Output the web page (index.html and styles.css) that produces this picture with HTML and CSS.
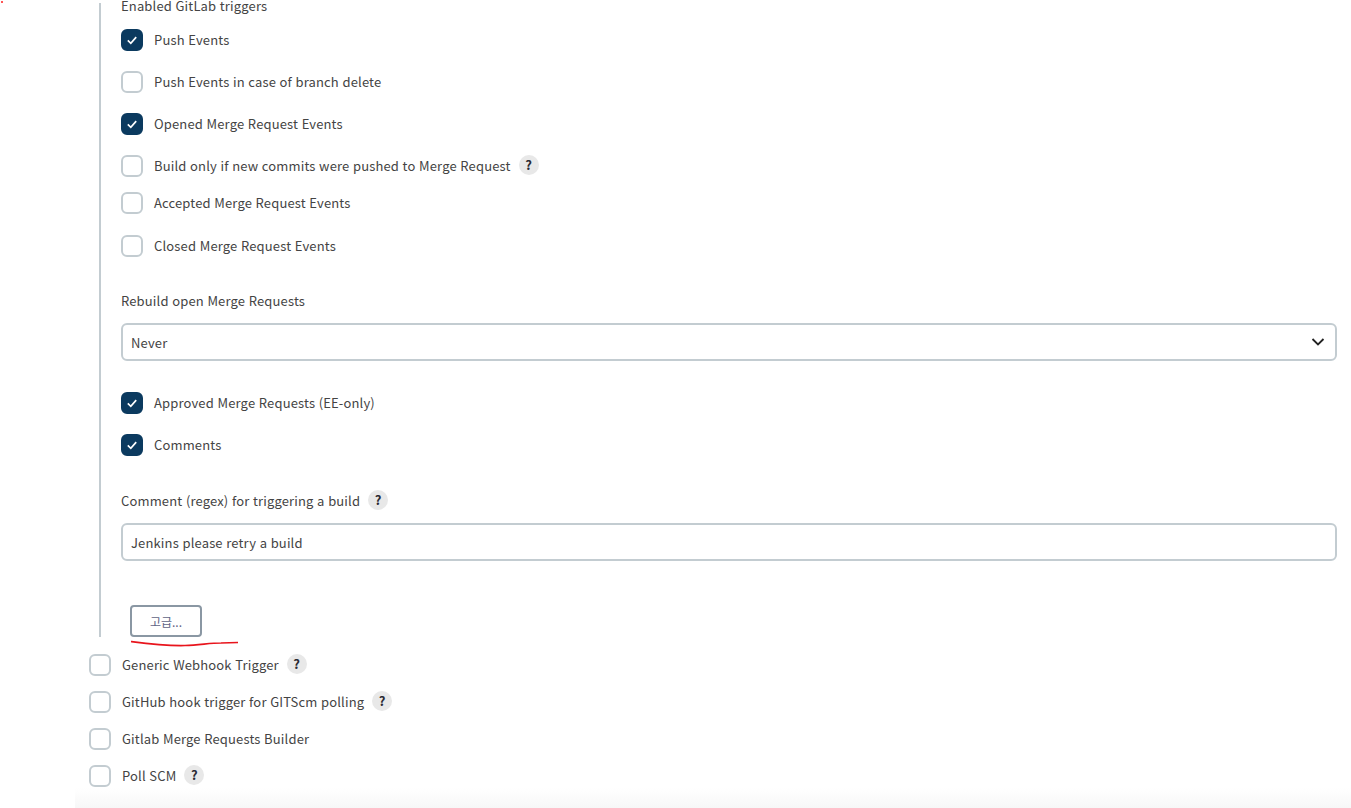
FILE: index.html
```html
<!DOCTYPE html>
<html lang="en">
<head>
  <meta charset="UTF-8" />
  <meta name="viewport" content="width=device-width, initial-scale=1.0" />
  <title>Build Triggers</title>
  <link rel="stylesheet" href="styles.css">
</head>
<body>
  <span class="red-dot"></span>

  <main class="triggers">
    <section class="nested">
      <div class="group-title">Enabled GitLab triggers</div>

      <label class="row"><span class="box checked"><svg viewBox="0 0 22 22"><path d="M6.8 11.4l3 2.9 5.4-6.2"/></svg></span>Push Events</label>
      <label class="row"><span class="box"></span>Push Events in case of branch delete</label>
      <label class="row"><span class="box checked"><svg viewBox="0 0 22 22"><path d="M6.8 11.4l3 2.9 5.4-6.2"/></svg></span>Opened Merge Request Events</label>
      <label class="row row-tight"><span class="box"></span>Build only if new commits were pushed to Merge Request<span class="help">?</span></label>
      <label class="row row-wide"><span class="box"></span>Accepted Merge Request Events</label>
      <label class="row"><span class="box"></span>Closed Merge Request Events</label>

      <div class="field-label rebuild-label">Rebuild open Merge Requests</div>
      <div class="field select">
        Never
        <svg class="chevron" viewBox="0 0 14 10"><path d="M1.5 2l5.500 5.500 5.500-5.500"/></svg>
      </div>

      <label class="row"><span class="box checked"><svg viewBox="0 0 22 22"><path d="M6.8 11.4l3 2.9 5.4-6.2"/></svg></span>Approved Merge Requests (EE-only)</label>
      <label class="row"><span class="box checked"><svg viewBox="0 0 22 22"><path d="M6.8 11.4l3 2.9 5.4-6.2"/></svg></span>Comments</label>

      <div class="field-label comment-label">Comment (regex) for triggering a build<span class="help">?</span></div>
      <div class="field">Jenkins please retry a build</div>

      <div class="advanced">
        <button class="btn-advanced">고급...</button>
        <svg class="scribble" viewBox="0 0 110 8"><path d="M1 1.500C20 4 35 6 55 5.500C70 5 80 3 91 3L108 2.500"/></svg>
      </div>
    </section>

    <label class="row row-outer"><span class="box"></span>Generic Webhook Trigger<span class="help">?</span></label>
    <label class="row row-outer"><span class="box"></span>GitHub hook trigger for GITScm polling<span class="help">?</span></label>
    <label class="row row-outer"><span class="box"></span>Gitlab Merge Requests Builder</label>
    <label class="row row-outer"><span class="box"></span>Poll SCM<span class="help">?</span></label>
  </main>

  <div class="bottom-fade"></div>
</body>
</html>
```

FILE: styles.css
```css
html,
body {
  height: 808px;
  overflow: hidden;
}

body {
  margin: 0;
  background: #fff;
  color: #444;
  font-family: "Noto Sans CJK KR", "Noto Sans", sans-serif;
  font-size: 13px;
  letter-spacing: 0.15px;
  word-spacing: 0.5px;
  position: relative;
}

.red-dot {
  position: absolute;
  left: 1px;
  top: 1px;
  width: 2px;
  height: 2px;
  background: #f55;
}

.triggers {
  padding-left: 89px;
  padding-right: 14px;
  padding-top: 3px;
}

.nested {
  display: flow-root;
  margin-left: 10px;
  border-left: 2px solid #c3ccd1;
  padding-left: 20px;
  height: 634px;
  box-sizing: border-box;
}

.group-title {
  height: 26px;
  line-height: 12px;
  margin-top: -3px;
  margin-bottom: 3px;
}

.row {
  display: flex;
  align-items: center;
  height: 22px;
  box-sizing: border-box;
  padding-bottom: 2px;
  margin-bottom: 20px;
  white-space: nowrap;
}

.row-tight {
  margin-bottom: 15px;
}

.row-wide {
  margin-bottom: 21px;
}

.row-outer {
  margin-bottom: 15px;
}

.row-outer:first-of-type {
  margin-top: 17px;
}

.box {
  flex: none;
  width: 22px;
  height: 22px;
  box-sizing: border-box;
  border: 2px solid #c3ccd1;
  border-radius: 6px;
  margin-right: 11px;
  margin-bottom: -2px;
  position: relative;
}

.box.checked {
  background: #0b3a5f;
  border-color: #0b3a5f;
}

.box svg {
  position: absolute;
  left: -2px;
  top: -2px;
  width: 22px;
  height: 22px;
}

.box path {
  fill: none;
  stroke: #fff;
  stroke-width: 1.7;
}

.help {
  display: inline-block;
  width: 20px;
  height: 20px;
  line-height: 20px;
  margin-left: 8px;
  border-radius: 50%;
  background: #e8e8e8;
  color: #2a2a33;
  font-size: 13px;
  font-weight: 700;
  text-align: center;
}

.field-label {
  display: flex;
  align-items: center;
  height: 20px;
}

.rebuild-label {
  margin-top: 33px;
  margin-bottom: 13px;
}

.comment-label {
  margin-top: 34px;
  margin-bottom: 13px;
}

.field {
  height: 38px;
  box-sizing: border-box;
  border: 2px solid #c3ccd1;
  border-radius: 6px;
  padding: 0 8px;
  line-height: 35px;
  position: relative;
}

.select {
  margin-bottom: 31px;
}

.chevron {
  position: absolute;
  right: 10px;
  top: 12px;
  width: 14px;
  height: 10px;
  fill: none;
  stroke: #222;
  stroke-width: 1.8;
}

.advanced {
  margin-top: 44px;
  margin-left: 9px;
  position: relative;
}

.btn-advanced {
  display: block;
  width: 72px;
  height: 32px;
  padding: 0;
  background: #fff;
  border: 2px solid #8a97a3;
  border-radius: 4px;
  color: #5f6485;
  font-family: inherit;
  font-size: 12px;
}

.scribble {
  position: absolute;
  left: 0;
  top: 35px;
  width: 110px;
  height: 8px;
  fill: none;
  stroke: #e8141c;
  stroke-width: 1.7;
}

.bottom-fade {
  position: absolute;
  left: 75px;
  right: 0;
  bottom: 0;
  height: 20px;
  background: linear-gradient(#fff, #f7f7f7);
}
```
